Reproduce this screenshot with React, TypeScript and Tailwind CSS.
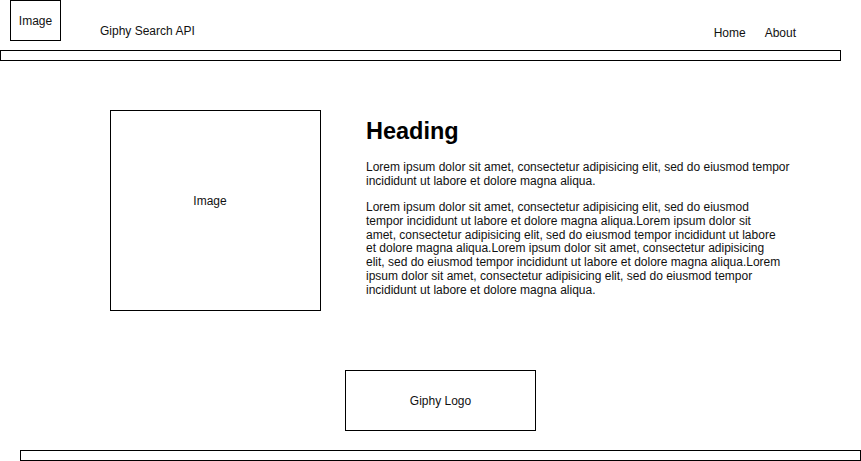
export default function App() {
  return (
    <main className="w-[861px] h-[461px] bg-white text-[#111] font-['Liberation_Sans',Arial,sans-serif] text-[12px] overflow-hidden">
      <Header />
      <section className="flex mt-[49px] pl-[110px]">
        <Box className="w-[211px] h-[201px] pb-[20px] pr-[11px]">Image</Box>
        <div className="ml-[45px] mt-[7px]">
          <h1 className="text-[23.5px] leading-[28px] font-bold text-black">Heading</h1>
          <p className="mt-[15px] w-[432px] leading-[14px]">
            Lorem ipsum dolor sit amet, consectetur adipisicing elit, sed do eiusmod tempor incididunt ut labore et dolore magna aliqua.
          </p>
          <p className="mt-[13px] w-[418px] leading-[13.8px]">
            Lorem ipsum dolor sit amet, consectetur adipisicing elit, sed do eiusmod tempor incididunt ut labore et dolore magna aliqua.Lorem ipsum dolor sit amet, consectetur adipisicing elit, sed do eiusmod tempor incididunt ut labore et dolore magna aliqua.Lorem ipsum dolor sit amet, consectetur adipisicing elit, sed do eiusmod tempor incididunt ut labore et dolore magna aliqua.Lorem ipsum dolor sit amet, consectetur adipisicing elit, sed do eiusmod tempor incididunt ut labore et dolore magna aliqua.
          </p>
        </div>
      </section>
      <Box className="ml-[345px] mt-[59px] w-[191px] h-[61px]">Giphy Logo</Box>
      <div className="ml-[20px] mt-[19px] w-[841px] h-[11px] border border-black" />
    </main>
  )
}

function Header() {
  return (
    <header>
      <div className="flex h-[50px]">
        <Box className="ml-[10px] w-[51px] h-[41px]">Image</Box>
        <div className="ml-[39px] mt-[22px]">Giphy Search API</div>
        <nav className="ml-auto mr-[65px] mt-[24px] flex gap-[19px]">
          <span className="ml-[1px]">Home</span>
          <span>About</span>
        </nav>
      </div>
      <div className="w-[841px] h-[11px] border border-black" />
    </header>
  )
}

function Box({ className, children }: { className: string; children: React.ReactNode }) {
  return (
    <div className={"flex items-center justify-center border border-black shrink-0 " + className}>
      {children}
    </div>
  )
}
